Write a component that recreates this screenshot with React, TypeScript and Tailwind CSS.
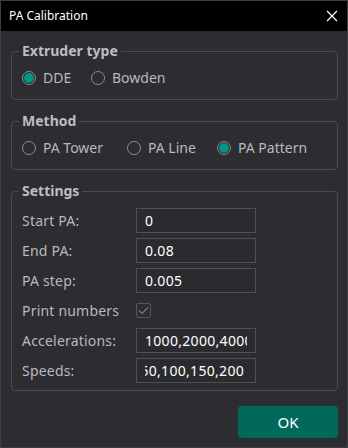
import React from "react";

const FONT = { fontFamily: '"Noto Sans", "Open Sans", sans-serif' };

function Radio({ checked, label, width }: { checked?: boolean; label: string; width: string }) {
  return (
    <div className={`flex items-center gap-[7px] ${width}`}>
      <span className="flex h-[14px] w-[14px] items-center justify-center rounded-full border border-[#8c8c92]">
        {checked && <span className="h-[10px] w-[10px] rounded-full bg-[#009688]" />}
      </span>
      <span className="text-[14px] leading-[20px] text-[#b9b9bf]">{label}</span>
    </div>
  );
}

function Group({ title, className, children }: { title: string; className: string; children: React.ReactNode }) {
  return (
    <fieldset className={`ml-[10px] w-[327px] rounded-[4px] border border-[#4b4b50] px-[10px] ${className}`}>
      <legend className="-ml-[3px] px-[3px] text-[14px] font-bold leading-[20px] text-[#bdbdc3]">{title}</legend>
      {children}
    </fieldset>
  );
}

function Field({ label, value, end }: { label: string; value: string; end?: boolean }) {
  return (
    <div className="flex h-[25px] items-center">
      <span className="w-[114px] text-[14px] tracking-[0.2px] text-[#b9b9bf]">{label}</span>
      <div className="flex h-[25px] w-[120px] items-center border border-[#4f4f55] bg-[#2b2a2e] px-[8px]">
        <div className={`flex w-full overflow-hidden ${end ? "justify-end" : "justify-start"}`}>
          <span className={`shrink-0 whitespace-nowrap text-[14px] tracking-[0.3px] text-white ${end ? "pr-[3px]" : ""}`}>
            {value}
          </span>
        </div>
      </div>
    </div>
  );
}

export default function App() {
  return (
    <div style={FONT} className="flex h-[448px] w-[348px] flex-col border border-[#3d3d40] bg-[#2d2c30]">
      <div className="flex h-[30px] shrink-0 items-center justify-between bg-black pl-[8px] pr-[9px]">
        <span className="text-[12px] text-white">PA Calibration</span>
        <svg width="12" height="12" viewBox="0 0 12 12">
          <path d="M1 1 L11 11 M11 1 L1 11" stroke="#ffffff" strokeWidth="1.2" />
        </svg>
      </div>

      <Group title="Extruder type" className="mt-[10px] pb-[11px] pt-[7px]">
        <div className="flex items-center">
          <Radio checked label="DDE" width="w-[69px]" />
          <Radio label="Bowden" width="w-[100px]" />
        </div>
      </Group>

      <Group title="Method" className="mt-[11px] pb-[11px] pt-[7px]">
        <div className="flex items-center">
          <Radio label="PA Tower" width="w-[105px]" />
          <Radio label="PA Line" width="w-[90px]" />
          <Radio checked label="PA Pattern" width="w-[110px]" />
        </div>
      </Group>

      <Group title="Settings" className="mt-[11px] pb-[7px] pt-[7px]">
        <div className="flex flex-col gap-[5px]">
          <Field label="Start PA:" value="0" />
          <Field label="End PA:" value="0.08" />
          <Field label="PA step:" value="0.005" />
          <div className="flex h-[25px] items-center">
            <span className="w-[114px] text-[14px] tracking-[0.2px] text-[#b9b9bf]">Print numbers</span>
            <span className="flex h-[15px] w-[15px] items-center justify-center rounded-[2px] border border-[#55555a]">
              <svg width="11" height="9" viewBox="0 0 11 9">
                <path d="M1 4.5 L4 7.5 L10 1.5" stroke="#7c7c82" strokeWidth="1.2" fill="none" />
              </svg>
            </span>
          </div>
          <Field label="Accelerations:" value="1000,2000,4000" />
          <Field label="Speeds:" value="50,100,150,200" end />
        </div>
      </Group>

      <div className="mt-[15px] flex justify-end pr-[9px]">
        <button className="flex h-[32px] w-[100px] items-center justify-center rounded-[4px] bg-[#00695c] text-[15px] text-white">
          OK
        </button>
      </div>
    </div>
  );
}
